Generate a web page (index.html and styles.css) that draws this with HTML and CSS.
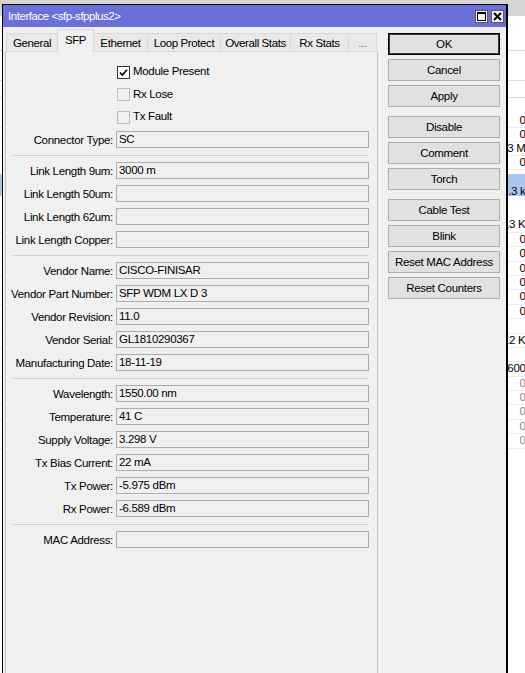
FILE: index.html
```html
<!DOCTYPE html>
<html>
<head>
<meta charset="utf-8">
<title>Interface sfp-sfpplus2</title>
<link rel="stylesheet" href="styles.css">
</head>
<body>
<div class="desktop">
  <div class="bg-top"></div>
  <div class="bg-band b1"></div>
  <div class="bg-band b2"></div>
  <div class="bg-band b3"></div>
  <div class="bg-spacer s1"></div>
  <div class="bg-row ra"><span class="v">0 bps</span></div>
  <div class="bg-row ra"><span class="v">0 bps</span></div>
  <div class="bg-row ra"><span class="v w">1.3 Mbps</span></div>
  <div class="bg-row ra"><span class="v">0 bps</span></div>
  <div class="bg-spacer s2"></div>
  <div class="bg-sel"><span class="v w">18.3 kbps</span></div>
  <div class="bg-spacer s3"></div>
  <div class="bg-row rb"><span class="v w">21.3 Kbps</span></div>
  <div class="bg-row rb"><span class="v">0 bps</span></div>
  <div class="bg-row rb"><span class="v">0 bps</span></div>
  <div class="bg-row rb"><span class="v">0 bps</span></div>
  <div class="bg-row rb"><span class="v">0 bps</span></div>
  <div class="bg-row rb"><span class="v">0 bps</span></div>
  <div class="bg-row rb"><span class="v">0 bps</span></div>
  <div class="bg-row rb"></div>
  <div class="bg-row rb"><span class="v w">11.2 Kbps</span></div>
  <div class="bg-row rb"></div>
  <div class="bg-row rb"><span class="v">600 bps</span></div>
  <div class="bg-row rb dim"><span class="v">0 bps</span></div>
  <div class="bg-row rb dim"><span class="v">0 bps</span></div>
  <div class="bg-row rb dim"><span class="v">0 bps</span></div>
  <div class="bg-row rb dim"><span class="v">0 bps</span></div>
  <div class="bg-row rb dim"><span class="v">0 bps</span></div>
</div>

<div class="window">
  <div class="titlebar">
    <span class="title">Interface &lt;sfp-sfpplus2&gt;</span>
    <div class="tbtns">
      <span class="tbtn"><svg width="11" height="11" viewBox="0 0 11 11"><rect x="1.5" y="1.5" width="8" height="8" fill="none" stroke="#000" stroke-width="1"/><rect x="1" y="1" width="9" height="2" fill="#000"/></svg></span>
      <span class="tbtn"><svg width="11" height="11" viewBox="0 0 11 11"><path d="M2 2 L9 9 M9 2 L2 9" stroke="#000" stroke-width="2"/></svg></span>
    </div>
  </div>
  <div class="body">
    <div class="tabctl">
      <div class="tabs">
        <div class="tab t1">General</div>
        <div class="tab t2 sel">SFP</div>
        <div class="tab t3">Ethernet</div>
        <div class="tab t4">Loop Protect</div>
        <div class="tab t5">Overall Stats</div>
        <div class="tab t6">Rx Stats</div>
        <div class="tab t7">...</div>
      </div>
      <div class="panel">
        <div class="form">
          <div class="chkrow"><span class="lbl"></span><span class="box on"><svg width="11" height="11" viewBox="0 0 11 11"><path d="M2 5.5 L4.3 8 L9 2.8" fill="none" stroke="#000" stroke-width="1.7"/></svg></span><span class="cbtext">Module Present</span></div>
          <div class="chkrow"><span class="lbl"></span><span class="box"></span><span class="cbtext">Rx Lose</span></div>
          <div class="chkrow"><span class="lbl"></span><span class="box"></span><span class="cbtext">Tx Fault</span></div>
          <div class="row first"><span class="lbl">Connector Type:</span><span class="field">SC</span></div>

          <div class="sep"></div>
          <div class="section">
            <div class="row"><span class="lbl">Link Length 9um:</span><span class="field">3000 m</span></div>
            <div class="row"><span class="lbl">Link Length 50um:</span><span class="field"></span></div>
            <div class="row"><span class="lbl">Link Length 62um:</span><span class="field"></span></div>
            <div class="row"><span class="lbl">Link Length Copper:</span><span class="field"></span></div>
          </div>

          <div class="sep"></div>
          <div class="section">
            <div class="row"><span class="lbl">Vendor Name:</span><span class="field">CISCO-FINISAR</span></div>
            <div class="row"><span class="lbl">Vendor Part Number:</span><span class="field">SFP WDM LX D 3</span></div>
            <div class="row"><span class="lbl">Vendor Revision:</span><span class="field">11.0</span></div>
            <div class="row"><span class="lbl">Vendor Serial:</span><span class="field">GL1810290367</span></div>
            <div class="row"><span class="lbl">Manufacturing Date:</span><span class="field">18-11-19</span></div>
          </div>

          <div class="sep"></div>
          <div class="section">
            <div class="row"><span class="lbl">Wavelength:</span><span class="field">1550.00 nm</span></div>
            <div class="row"><span class="lbl">Temperature:</span><span class="field">41 C</span></div>
            <div class="row"><span class="lbl">Supply Voltage:</span><span class="field">3.298 V</span></div>
            <div class="row"><span class="lbl">Tx Bias Current:</span><span class="field">22 mA</span></div>
            <div class="row"><span class="lbl">Tx Power:</span><span class="field">-5.975 dBm</span></div>
            <div class="row"><span class="lbl">Rx Power:</span><span class="field">-6.589 dBm</span></div>
          </div>

          <div class="sep"></div>
          <div class="section">
            <div class="row"><span class="lbl">MAC Address:</span><span class="field"></span></div>
          </div>
        </div>
      </div>
    </div>
    <div class="buttons">
      <div class="group">
        <div class="btn default">OK</div>
        <div class="btn">Cancel</div>
        <div class="btn">Apply</div>
      </div>
      <div class="group">
        <div class="btn">Disable</div>
        <div class="btn">Comment</div>
        <div class="btn">Torch</div>
      </div>
      <div class="group">
        <div class="btn">Cable Test</div>
        <div class="btn">Blink</div>
        <div class="btn">Reset MAC Address</div>
        <div class="btn">Reset Counters</div>
      </div>
    </div>
  </div>
</div>
</body>
</html>
```

FILE: styles.css
```css
* { box-sizing: border-box; }

html, body {
  margin: 0;
  padding: 0;
}

body {
  width: 525px;
  height: 673px;
  overflow: hidden;
  position: relative;
  background: #ffffff;
  font-family: "Liberation Sans", Arial, sans-serif;
  font-size: 11.5px;
  letter-spacing: -0.32px;
  color: #000;
}

/* ---------- background window (behind the dialog) ---------- */
.desktop {
  width: 525px;
  height: 673px;
  overflow: hidden;
}
.bg-top {
  height: 16px;
  background: #d4d4d4;
}
.bg-band { border-bottom: 1px solid #dcdcdc; }
.bg-band.b1 { height: 35px; }
.bg-band.b2 { height: 30px; }
.bg-band.b3 { height: 17px; }
.bg-spacer.s1 { height: 15.5px; }
.bg-spacer.s2 { height: 4.5px; }
.bg-spacer.s3 { height: 22.4px; }

.bg-row {
  text-align: right;
  white-space: nowrap;
  overflow: hidden;
  border-bottom: 1px solid #ececec;
}
.bg-row.ra { height: 14px; line-height: 13px; }
.bg-row.rb { height: 14.4px; line-height: 13.4px; }
.bg-row.dim { color: #8a8a8a; }

.bg-sel {
  height: 22px;
  padding-top: 10px;
  line-height: 14px;
  text-align: right;
  white-space: nowrap;
  overflow: hidden;
  background: #a9c6ec;
}
.v { margin-right: -21px; }
.v.w { margin-right: -18px; }

/* ---------- dialog window ---------- */
.window {
  position: absolute;
  left: 2px;
  top: 4px;
  width: 506px;
  height: 669px;
  background: #f0f0f0;
  border: 1px solid #000;
  border-right-width: 2px;
  border-bottom: none;
  overflow: hidden;
}

.titlebar {
  height: 22px;
  background: #6b6fd8;
  display: flex;
  align-items: center;
  justify-content: space-between;
  padding: 0 2px 0 5px;
}
.title {
  color: #fff;
  white-space: nowrap;
  letter-spacing: -0.45px;
}
.tbtns {
  display: flex;
  gap: 3px;
}
.tbtn {
  width: 13px;
  height: 13px;
  background: #f2f2f2;
  border: 1px solid #5a5a5a;
  display: flex;
  align-items: center;
  justify-content: center;
}
.tbtn svg { display: block; }

.body {
  display: flex;
  align-items: flex-start;
}

/* ---------- tab control ---------- */
.tabctl {
  margin-left: 2px;
  width: 373px;
}
.tabs {
  height: 24px;
  display: flex;
  align-items: flex-end;
  padding-left: 1px;
}
.tab {
  height: 18px;
  border: 1px solid #d9d9d9;
  border-bottom: none;
  margin-right: -1px;
  background: #e9e9e9;
  display: flex;
  align-items: center;
  justify-content: center;
  white-space: nowrap;
  letter-spacing: -0.4px;
}
.tab.sel {
  height: 23px;
  margin-bottom: -1px;
  background: #f0f0f0;
  position: relative;
  z-index: 1;
  padding-bottom: 3px;
}
.t1 { width: 52px; }
.t2 { width: 37px; }
.t3 { width: 55px; }
.t4 { width: 74px; }
.t5 { width: 71px; }
.t6 { width: 59px; }
.t7 { width: 29px; color: #6d6d6d; }

.panel {
  height: 630px;
  border: 1px solid #c2c2c2;
  border-top-color: #d9d9d9;
  background: #f0f0f0;
}

.form {
  padding: 9px 0 0 0;
  display: flex;
  flex-direction: column;
}

.chkrow {
  height: 22.5px;
  display: flex;
  align-items: center;
}
.cbtext {
  position: relative;
  top: -1px;
}
.row {
  height: 17px;
  display: flex;
  align-items: center;
}
.row.first { margin-top: 2.5px; }
.section {
  display: flex;
  flex-direction: column;
  gap: 6px;
}
.lbl {
  width: 107px;
  margin-right: 3px;
  display: flex;
  justify-content: flex-end;
  white-space: nowrap;
  flex: none;
}
.field {
  width: 253px;
  height: 17px;
  border: 1px solid #acacac;
  background: #f0f0f0;
  padding: 0 2px;
  line-height: 15px;
  white-space: nowrap;
  flex: none;
}

.box {
  width: 13px;
  height: 13px;
  margin-left: 1px;
  margin-right: 3px;
  border: 1px solid #bcbcbc;
  background: #f0f0f0;
  flex: none;
  display: flex;
  align-items: center;
  justify-content: center;
}
.box.on {
  border-color: #333;
  background: #fff;
}
.box svg { display: block; }

.sep {
  width: 356px;
  height: 1px;
  margin: 7px 0 6px 7px;
  background: #d0d0d0;
}

/* ---------- buttons ---------- */
.buttons {
  margin-left: 10px;
  padding-top: 6px;
  width: 112px;
  display: flex;
  flex-direction: column;
  gap: 9px;
}
.group {
  display: flex;
  flex-direction: column;
  gap: 4px;
}
.btn {
  height: 22px;
  border: 1px solid #adadad;
  background: #e1e1e1;
  display: flex;
  align-items: center;
  justify-content: center;
  white-space: nowrap;
}
.btn.default {
  border-color: #000;
  box-shadow: inset 0 0 0 1px #3a3a3a;
}
```
